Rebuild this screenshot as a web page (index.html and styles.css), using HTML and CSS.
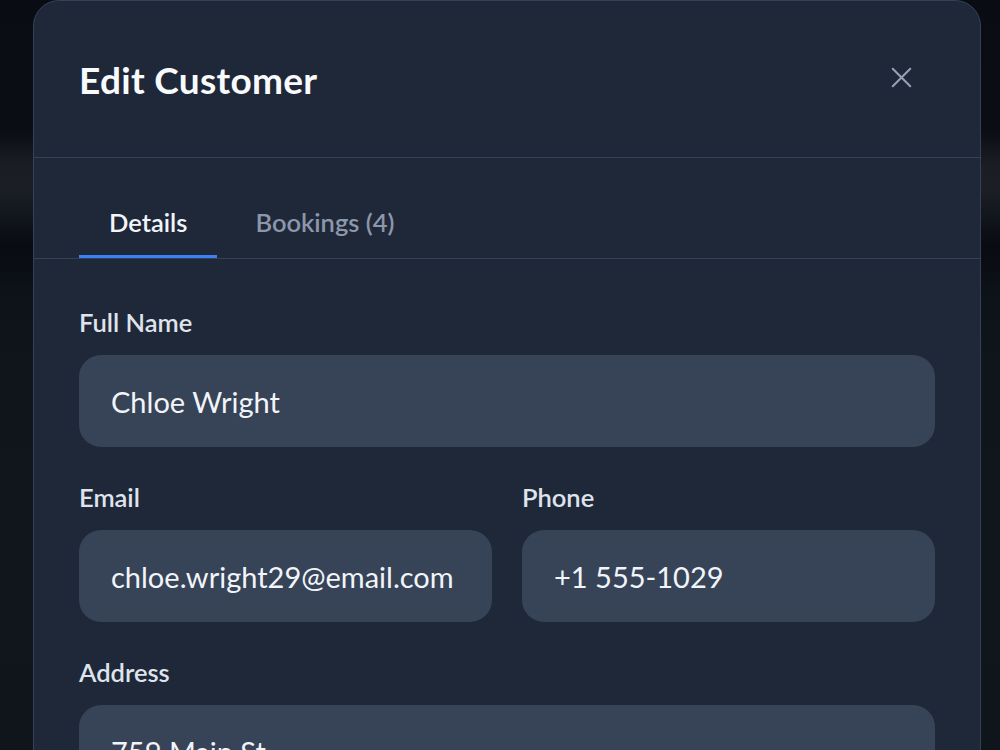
FILE: index.html
```html
<!DOCTYPE html>
<html>

<head>
    <title>Edit Customer</title>
    <link rel="stylesheet" href="styles.css">
</head>

<body>
    <div class="backdrop">
        <div class="modal">
            <div class="modal-header">
                <h2 class="modal-title">Edit Customer</h2>
                <button type="button" class="close-btn" aria-label="Close">
                    <svg width="24" height="24" viewBox="0 0 24 24" fill="none" stroke="currentColor" stroke-width="2.4" stroke-linecap="round">
                        <path d="M2 2L22 22M22 2L2 22"/>
                    </svg>
                </button>
            </div>

            <div class="tabs">
                <div class="tab active">Details</div>
                <div class="tab">Bookings (4)</div>
            </div>

            <form class="modal-body" autocomplete="off">
                <div class="field">
                    <label>Full Name</label>
                    <input type="text" value="Chloe Wright">
                </div>
                <div class="field-row">
                    <div class="field">
                        <label>Email</label>
                        <input type="text" value="chloe.wright29@email.com">
                    </div>
                    <div class="field">
                        <label>Phone</label>
                        <input type="text" value="+1 555-1029">
                    </div>
                </div>
                <div class="field">
                    <label>Address</label>
                    <input type="text" value="759 Main St">
                </div>
            </form>
        </div>
    </div>
</body>

</html>
```

FILE: styles.css
```css
html, body {
    margin: 0;
    padding: 0;
    height: 100%;
    overflow: hidden;
}

body {
    font-family: "Lato", "Noto Sans", sans-serif;
    background: linear-gradient(to bottom,
        #090c13 0px,
        #0a0d14 130px,
        #1a1d24 165px,
        #1b1e25 190px,
        #12161d 215px,
        #080b11 245px,
        #0d1118 290px,
        #10141b 360px,
        #11151c 560px,
        #10141b 750px);
}

.backdrop {
    padding-left: 33px;
    padding-top: 0;
}

.modal {
    width: 946px;
    height: 800px;
    background-color: #1f2839;
    border: 1px solid #364155;
    border-radius: 26px;
}

.modal-header {
    height: 156px;
    padding: 0 45px;
    display: flex;
    align-items: center;
    justify-content: space-between;
    border-bottom: 1px solid #364155;
}

.modal-title {
    margin: 0;
    font-size: 37px;
    font-weight: 700;
    color: #f8fafc;
    letter-spacing: 0.3px;
}

.close-btn {
    background: none;
    border: none;
    padding: 0;
    margin-right: 20px;
    color: #94a0b4;
    width: 24px;
    height: 24px;
    display: flex;
}

.close-btn svg {
    width: 21px;
    height: 21px;
}

.tabs {
    display: flex;
    gap: 8px;
    padding: 50px 45px 0;
    border-bottom: 1px solid #364155;
}

.tab {
    padding: 0 30px 19px;
    font-size: 25.5px;
    line-height: 28px;
    font-weight: 600;
    color: #8c97aa;
    border-bottom: 3px solid transparent;
}

.tab.active {
    color: #f1f5f9;
    border-bottom-color: #3b82f6;
}

.modal-body {
    padding: 49px 45px 0;
    display: flex;
    flex-direction: column;
    gap: 36px;
}

.field-row {
    display: grid;
    grid-template-columns: 1fr 1fr;
    gap: 30px;
}

.field {
    display: flex;
    flex-direction: column;
}

.field label {
    font-size: 25.5px;
    line-height: 28px;
    font-weight: 600;
    color: #dfe4ec;
    margin-bottom: 19px;
}

.field input {
    height: 92px;
    box-sizing: border-box;
    width: 100%;
    padding: 0 32px;
    border: none;
    border-radius: 22px;
    background-color: #374357;
    color: #f1f5f9;
    font-family: "Lato", "Noto Sans", sans-serif;
    font-size: 29px;
    outline: none;
}
```
